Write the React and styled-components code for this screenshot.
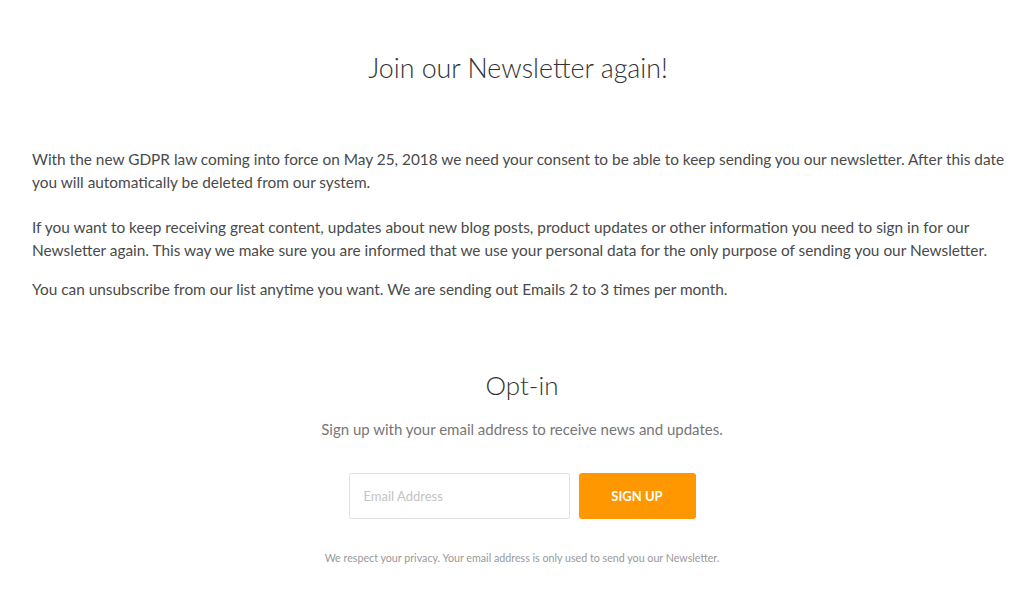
import styled, { createGlobalStyle } from 'styled-components'

const GlobalStyle = createGlobalStyle`
    body {
        margin: 0;
        background: #ffffff;
        font-family: Lato, 'Liberation Sans', sans-serif;
        color: #4a4a4a;
    }
`

const Page = styled.main`
    padding: 52px 12px 0 32px;
`
const Title = styled.h1`
    margin: 0;
    padding-right: 8px;
    text-align: center;
    font-size: 26.8px;
    font-weight: 300;
    color: #333;
    line-height: 32px;
`
const Body = styled.section`
    margin-top: 64px;
`
const Paragraph = styled.p`
    margin: 0 0 ${({ gap }) => gap}px;
    font-size: 15.4px;
    line-height: 23px;
    color: #4a4a4a;
`
const OptIn = styled.section`
    margin-top: 68px;
    display: flex;
    flex-direction: column;
    align-items: center;
`
const SubTitle = styled.h2`
    margin: 0;
    font-size: 26px;
    font-weight: 300;
    color: #333;
    line-height: 32px;
`
const Lead = styled.p`
    margin: 19px 0 0;
    font-size: 15px;
    color: #777;
`
const Form = styled.form`
    display: flex;
    gap: 9px;
    margin-top: 35px;
`
const EmailInput = styled.input`
    box-sizing: border-box;
    width: 221px;
    height: 46px;
    border: 1px solid #e2e2e2;
    border-radius: 2px;
    padding: 0 14px;
    font-family: inherit;
    font-size: 13px;
    color: #333;
    &::placeholder {
        color: #c4c4c4;
    }
`
const Button = styled.button`
    width: 117px;
    height: 46px;
    border: none;
    border-radius: 3px;
    background: #ff9800;
    color: #fff;
    font-family: inherit;
    font-size: 13px;
    font-weight: 700;
    cursor: pointer;
`
const Note = styled.p`
    margin: 32px 0 0;
    font-size: 10.7px;
    color: #999;
`

function App() {
    return (
        <Page>
            <GlobalStyle />
            <Title>Join our Newsletter again!</Title>
            <Body>
                <Paragraph gap={22}>
                    With the new GDPR law coming into force on May 25, 2018 we need your consent to be
                    able to keep sending you our newsletter. After this date you will automatically be
                    deleted from our system.
                </Paragraph>
                <Paragraph gap={16}>
                    If you want to keep receiving great content, updates about new blog posts, product
                    updates or other information you need to sign in for our Newsletter again. This way
                    we make sure you are informed that we use your personal data for the only purpose of
                    sending you our Newsletter.
                </Paragraph>
                <Paragraph gap={0}>
                    You can unsubscribe from our list anytime you want. We are sending out Emails 2 to 3
                    times per month.
                </Paragraph>
            </Body>
            <OptIn>
                <SubTitle>Opt-in</SubTitle>
                <Lead>Sign up with your email address to receive news and updates.</Lead>
                <Form onSubmit={(e) => e.preventDefault()}>
                    <EmailInput type="email" placeholder="Email Address" />
                    <Button type="submit">SIGN UP</Button>
                </Form>
                <Note>
                    We respect your privacy. Your email address is only used to send you our Newsletter.
                </Note>
            </OptIn>
        </Page>
    )
}

export default App
